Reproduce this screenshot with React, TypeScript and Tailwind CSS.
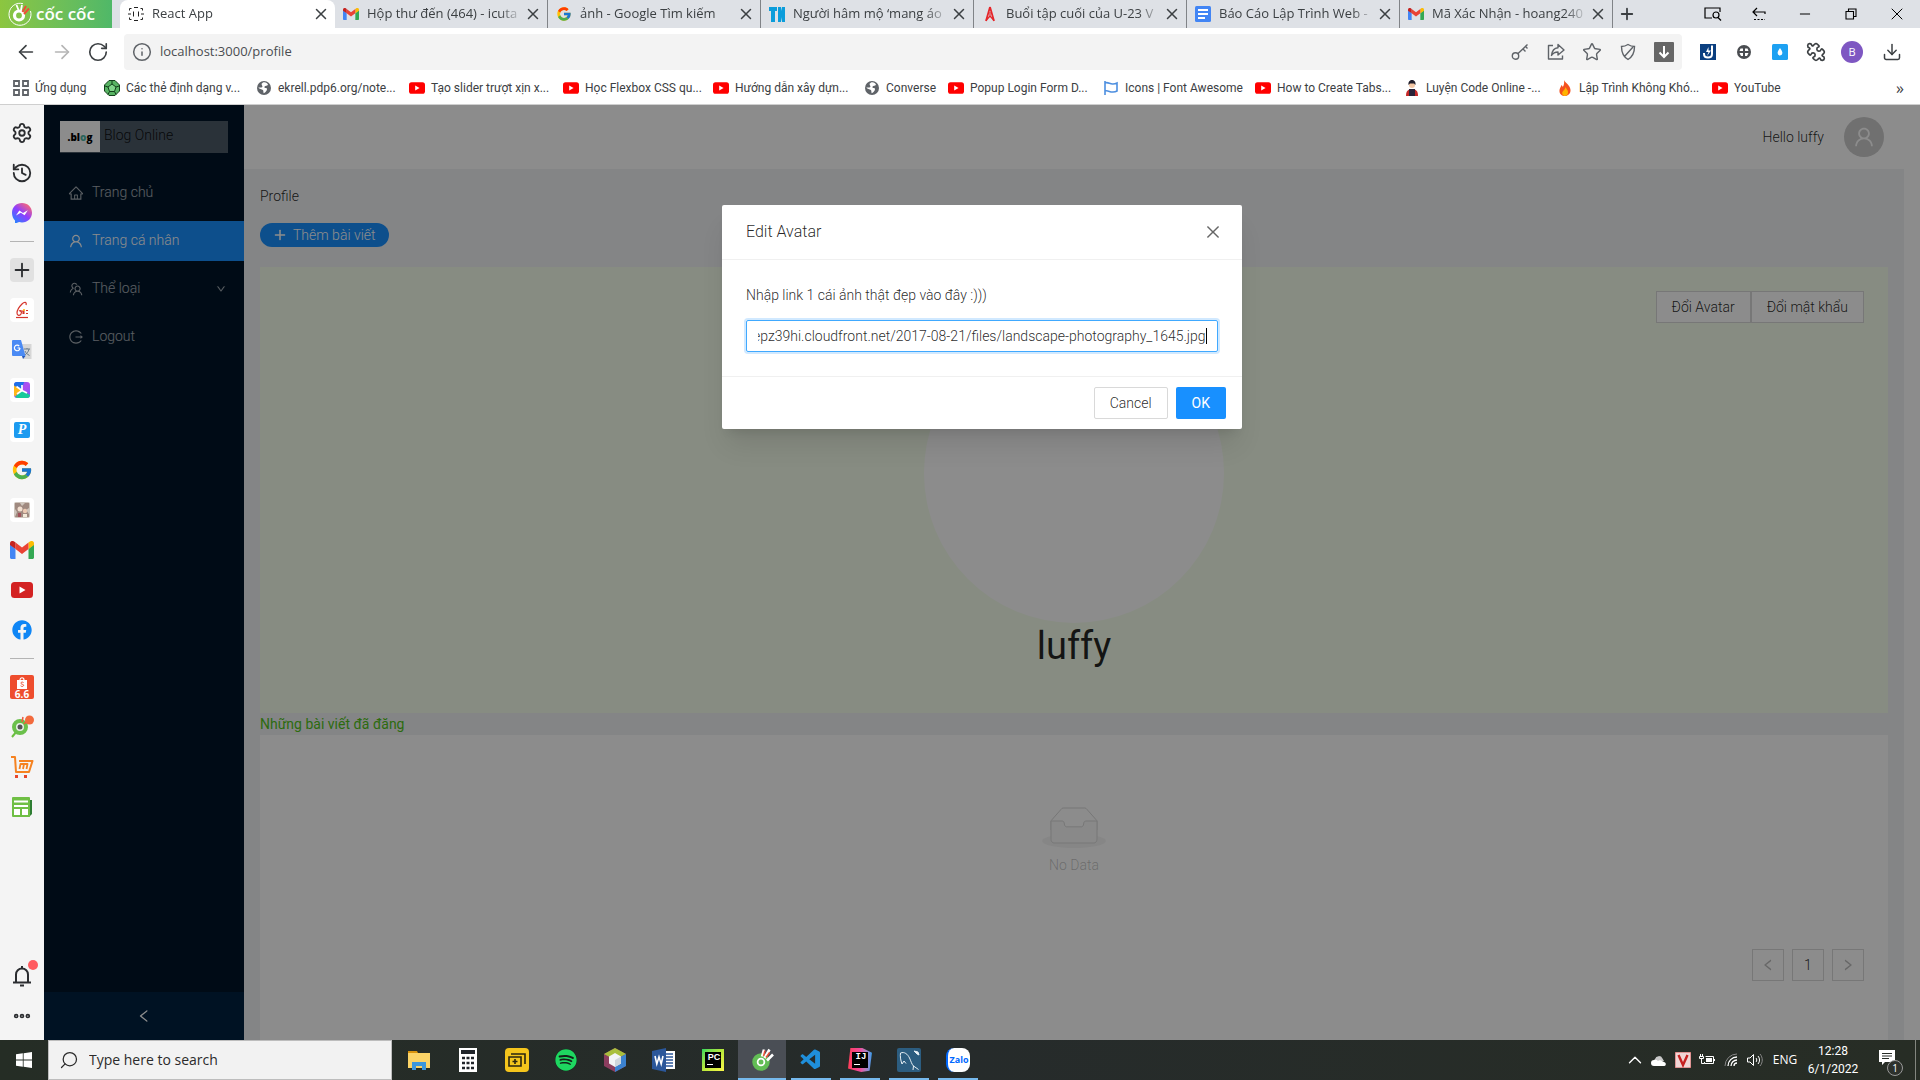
import { useEffect, useRef, useState, type ReactNode } from "react";
import {
  AiOutlineClose,
  AiOutlineDown,
  AiOutlineHome,
  AiOutlineLeft,
  AiOutlineLogout,
  AiOutlinePlus,
  AiOutlineRight,
  AiOutlineTeam,
  AiOutlineUser,
} from "react-icons/ai";
import { FcGoogle } from "react-icons/fc";
import { FaFacebook, FaSpotify } from "react-icons/fa";
import { VscVscode } from "react-icons/vsc";
import {
  ArrowLeft,
  ArrowRight,
  Bell,
  ChevronUp,
  Download,
  Ellipsis,
  History,
  Info,
  Minus,
  Plus,
  Puzzle,
  RotateCw,
  Search,
  Settings,
  Star,
  X,
} from "lucide-react";

/* ---------- small brand drawings ---------- */

function GmailIcon({ className }: { className: string }) {
  return (
    <svg viewBox="0 0 24 18" className={className} aria-hidden="true">
      <path d="M0 3v13.5C0 17.300.7 18 1.600 18H5.500V8z" fill="#4285f4" />
      <path d="M24 3v13.500c0 .8-.7 1.500-1.600 1.500H18.500V8z" fill="#34a853" />
      <path d="M18.500 1.600V8L24 4V2.500c0-2.200-2.400-3.300-4.100-2z" fill="#fbbc04" />
      <path d="M5.500 8V1.600L12 6.500l6.500-4.900V8L12 12.900z" fill="#ea4335" />
      <path d="M0 2.500V4l5.500 4V1.600L4.100.5C2.400-.8 0 .3 0 2.500z" fill="#c5221f" />
    </svg>
  );
}

function YoutubeIcon({ className, fill = "#ff0000" }: { className: string; fill?: string }) {
  return (
    <svg viewBox="0 0 22 16" className={className} aria-hidden="true">
      <rect width="22" height="16" rx="3.500" fill={fill} />
      <path d="M8.500 4.500v7l6-3.500z" fill="#fff" />
    </svg>
  );
}

function GlobeIcon() {
  return (
    <svg viewBox="0 0 16 16" className="size-4" aria-hidden="true">
      <circle cx="8" cy="8" r="7" fill="#5f6368" />
      <path d="M7 2.500c2.500-.6 4.500.5 5 2.300-1 1.400-2.600.6-3.400 1.600-.6 1 .4 1.600 1.400 1.700 1.200.2 1.300 1.500.5 2.600-.8 1-1.500 2.200-2.800 2.500-.6-1.200 0-2.300-.8-3.200C5.700 9 3.300 9.200 2.300 7.500c1.800-.2 2.900.2 4-.6C7 6 5.200 5 5.600 3.800z" fill="#fff" />
    </svg>
  );
}

function CocCocMark({ className, color = "#fff", core = "none" }: { className: string; color?: string; core?: string }) {
  return (
    <svg viewBox="0 0 24 24" className={className} aria-hidden="true">
      <circle cx="11" cy="14" r="6.500" fill={core} stroke={color} strokeWidth="4.500" />
      <circle cx="11" cy="14" r="2.500" fill={color} />
      <path d="M12 8.500 14 1.500M14.500 10l5-8.500M17 12.500l6-6" stroke="#fff" strokeWidth="2.600" />
      <path d="M13.500 8 15 2.500M16 9.500l3.500-5" stroke="#f04e37" strokeWidth="1.400" />
    </svg>
  );
}

function CocCocBadge() {
  return (
    <svg viewBox="0 0 24 24" className="size-6" fill="none" stroke="#fff" aria-hidden="true">
      <path d="M15 1.700A11 11 0 1 0 22.500 9" strokeWidth="1" />
      <circle cx="11" cy="13.500" r="4.500" strokeWidth="3.200" />
      <path d="M10.500 8 8.500 3M13 8l1-5" strokeWidth="1.800" />
      <path d="m14.500 10 3.500-6M16 12l5-5.500" stroke="#f04e37" strokeWidth="2" />
    </svg>
  );
}

function ReactFavicon() {
  return (
    <svg viewBox="0 0 16 16" className="size-4" fill="none" stroke="#222" strokeWidth="1" aria-hidden="true">
      <path d="M1.500 4.500v-2h2M12.500 2.500h2v2M14.500 11.500v2h-2M3.500 13.500h-2v-2" />
      <path d="M6 1.500h4M6 14.500h4" />
      <path d="M5.500 5.500v5M10.500 5.500v5M0 8h3M13 8h3" />
    </svg>
  );
}

/* ---------- browser chrome ---------- */

const tabs: { title: string; icon: ReactNode; active?: boolean }[] = [
  { title: "React App", icon: <ReactFavicon />, active: true },
  { title: "Hộp thư đến (464) - icuta", icon: <GmailIcon className="h-3 w-4" /> },
  { title: "ảnh - Google Tìm kiếm", icon: <FcGoogle className="size-4" /> },
  {
    title: "Người hâm mộ ‘mang áo",
    icon: (
      <svg viewBox="0 0 16 16" className="size-4" aria-hidden="true">
        <path d="M0 1h8v4H6v11H2V5H0zM9 1h3l1 4V1h3v15h-3l-1-5v5H9z" fill="#0b9ddb" />
      </svg>
    ),
  },
  {
    title: "Buổi tập cuối của U-23 V",
    icon: (
      <svg viewBox="0 0 16 16" className="size-4" fill="none" stroke="#e5252a" aria-hidden="true">
        <path d="M8 1 4 15M8 1l4 14" strokeWidth="1.800" />
        <path d="M8 6v4M4 14.500 8 10l4 4.500" strokeWidth="1.200" />
      </svg>
    ),
  },
  {
    title: "Báo Cáo Lập Trình Web -",
    icon: (
      <svg viewBox="0 0 16 16" className="size-4" aria-hidden="true">
        <rect width="16" height="16" rx="1.500" fill="#4285f4" />
        <path d="M3 4h10M3 8h10M3 12h7" stroke="#fff" strokeWidth="1.800" />
      </svg>
    ),
  },
  { title: "Mã Xác Nhận - hoang240", icon: <GmailIcon className="h-3 w-4" /> },
];

function TabStrip() {
  return (
    <div className="flex h-7 items-stretch bg-[#dee1e6]">
      <div className="flex w-28 shrink-0 items-center gap-1 bg-linear-to-r from-[#8cc63f] to-[#4fb868] pl-2">
        <CocCocBadge />
        <span className="font-['Open_Sans',sans-serif] text-[17px] font-semibold text-white">cốc cốc</span>
      </div>
      <div className="flex min-w-0 flex-1 pl-2">
        {tabs.map((tab) => (
          <div
            key={tab.title}
            className={
              tab.active
                ? "flex w-[215px] items-center gap-2 rounded-t-lg bg-white pr-1 pl-2"
                : "flex w-[213px] items-center gap-2 border-r border-[#808387] pr-1 pl-2"
            }
          >
            <span className="flex w-4 shrink-0 justify-center">{tab.icon}</span>
            <span className="-mr-2 min-w-0 flex-1 overflow-hidden mask-r-from-85% text-[13px] whitespace-nowrap text-[#3c4043]">{tab.title}</span>
            <button type="button" aria-label={"Close " + tab.title} className="flex w-5 shrink-0 justify-center">
              <X className="size-[18px] text-[#3c4043]" />
            </button>
          </div>
        ))}
        <button type="button" aria-label="New tab" className="flex w-7 items-center justify-center">
          <Plus className="size-[18px] text-[#3c4043]" strokeWidth={2.4} />
        </button>
      </div>
      <div className="flex text-black">
        <button type="button" aria-label="Search tabs" className="flex w-[46px] items-center justify-center">
          <svg viewBox="0 0 18 14" className="h-3.5 w-[18px]" fill="none" stroke="currentColor" strokeWidth="1.200" aria-hidden="true">
            <path d="M8 11H1V1h15v4" />
            <circle cx="12" cy="8" r="3" />
            <path d="m14 10.500 3 3" />
          </svg>
        </button>
        <button type="button" aria-label="Back to previous" className="flex w-[46px] items-center justify-center">
          <svg viewBox="0 0 14 14" className="size-3.5" fill="none" stroke="currentColor" strokeWidth="1.200" aria-hidden="true">
            <path d="M5 1 1 5l4 4M1 5h12v2" />
            <path d="M2 12.500h11" strokeDasharray="2 1.500" />
          </svg>
        </button>
        <button type="button" aria-label="Minimize" className="flex w-[46px] items-center justify-center">
          <Minus className="size-4" strokeWidth={1.5} />
        </button>
        <button type="button" aria-label="Restore" className="flex w-[46px] items-center justify-center">
          <svg viewBox="0 0 12 12" className="size-3" fill="none" stroke="currentColor" strokeWidth="1.100" aria-hidden="true">
            <path d="M1 3.500h7.500V11H1zM3.500 3.500V1H11v7.500H8.500" />
          </svg>
        </button>
        <button type="button" aria-label="Close window" className="flex w-[46px] items-center justify-center">
          <X className="size-5" strokeWidth={1.2} />
        </button>
      </div>
    </div>
  );
}

const omniboxActions: { label: string; icon: ReactNode }[] = [
  {
    label: "Saved passwords",
    icon: (
      <svg viewBox="0 0 18 18" className="size-[18px]" fill="none" stroke="currentColor" strokeWidth="1.400" aria-hidden="true">
        <circle cx="4.500" cy="13" r="3.200" />
        <path d="M6.800 10.700 16.500 1.500M12 6l2.500 2.500M14.500 3.500l2 2" />
      </svg>
    ),
  },
  {
    label: "Share",
    icon: (
      <svg viewBox="0 0 18 18" className="size-[18px]" fill="none" stroke="currentColor" strokeWidth="1.400" strokeLinejoin="round" aria-hidden="true">
        <path d="M6 2.500H1.500V16h14v-3.500" />
        <path d="M11 1.500 17 7l-6 5V9c-3 0-5 1-6.500 3.500C5 8 7 5 11 4.700z" />
      </svg>
    ),
  },
  { label: "Bookmark this page", icon: <Star className="size-5" strokeWidth={1.7} /> },
  {
    label: "Ad blocker",
    icon: (
      <svg viewBox="0 0 18 18" className="size-[18px]" fill="none" stroke="currentColor" strokeWidth="1.400" aria-hidden="true">
        <path d="M2.500 3.500C5 3.500 7 2.800 9 1.500c2 1.300 4 2 6.500 2 0 6-1.500 10-6.500 13-5-3-6.500-7-6.500-13zM5 14 14 4" />
      </svg>
    ),
  },
  {
    label: "Download media",
    icon: (
      <svg viewBox="0 0 20 20" className="size-5" aria-hidden="true">
        <rect width="20" height="20" rx="1" fill="#666" />
        <path d="M10 4v11M5.500 10.500 10 15l4.500-4.500" fill="none" stroke="#fff" strokeWidth="2" />
      </svg>
    ),
  },
];

const extensions: { label: string; icon: ReactNode }[] = [
  {
    label: "J extension",
    icon: (
      <svg viewBox="0 0 16 16" className="size-4" aria-hidden="true">
        <rect width="16" height="16" fill="#0b3f80" />
        <path d="M12 1.500v8.500c0 2.500-1.500 3.500-4 3.500s-4-1-4-3.500V9" fill="none" stroke="#fff" strokeWidth="2" />
        <path d="M8.500 3 6 8h2.500L7 12l4-5.500H8.500z" fill="#fff" />
      </svg>
    ),
  },
  {
    label: "Target extension",
    icon: (
      <svg viewBox="0 0 16 16" className="size-4" aria-hidden="true">
        <circle cx="8" cy="8" r="7" fill="#4a4d51" />
        <path d="M4.500 4.500H7V7H3.500zM9 4.500h2.500L12.500 7H9zM3.500 9H7v3H5zM9 9h3.500L11 12H9z" fill="#fff" />
      </svg>
    ),
  },
  {
    label: "Water drop extension",
    icon: (
      <svg viewBox="0 0 16 16" className="size-4" aria-hidden="true">
        <rect width="16" height="16" rx="1.500" fill="#1da1f2" />
        <path d="M8 4c1.500 2.300 2.400 3.600 2.400 5.100a2.400 2.400 0 0 1-4.800 0C5.600 7.600 6.500 6.300 8 4z" fill="#fff" />
      </svg>
    ),
  },
  { label: "Extensions", icon: <Puzzle className="size-5 -scale-x-100" strokeWidth={2} /> },
  {
    label: "Account",
    icon: <span className="flex size-[22px] items-center justify-center rounded-full bg-[#7e57c2] text-[11px] text-white">B</span>,
  },
  { label: "Downloads", icon: <Download className="size-5" strokeWidth={1.8} /> },
];

function Toolbar() {
  return (
    <div className="flex h-12 items-center bg-white pr-2.5 pl-2 text-[#3c4043]">
      <button type="button" aria-label="Back" className="flex w-9 justify-center">
        <ArrowLeft className="size-[22px]" strokeWidth={1.8} />
      </button>
      <button type="button" aria-label="Forward" className="flex w-9 justify-center text-[#b5b5b5]">
        <ArrowRight className="size-[22px]" strokeWidth={1.8} />
      </button>
      <button type="button" aria-label="Reload" className="mr-2 flex w-9 justify-center">
        <RotateCw className="size-[22px]" strokeWidth={1.8} />
      </button>
      <div className="flex h-9 flex-1 items-center rounded-sm bg-[#f3f3f3] pl-2">
        <Info className="mr-2 size-5 text-[#5f6368]" strokeWidth={1.8} />
        <input aria-label="Address" defaultValue="localhost:3000/profile" className="min-w-0 flex-1 bg-transparent text-[13px] text-[#4a4d51] outline-none" />
        {omniboxActions.map((a) => (
          <button key={a.label} type="button" aria-label={a.label} className="flex w-9 justify-center text-[#5f6368]">
            {a.icon}
          </button>
        ))}
      </div>
      <div className="flex pl-2">
        {extensions.map((e) => (
          <button key={e.label} type="button" aria-label={e.label} className="flex w-9 items-center justify-center last:ml-1">
            {e.icon}
          </button>
        ))}
      </div>
    </div>
  );
}

const yt = <YoutubeIcon className="h-3 w-4" />;

const bookmarks: { label: string; width: string; icon: ReactNode }[] = [
  {
    label: "Ứng dụng",
    width: "w-[91px]",
    icon: (
      <svg viewBox="0 0 16 16" className="size-4" fill="none" stroke="#5f6368" strokeWidth="1.800" aria-hidden="true">
        <path d="M1 1h5v5H1zM10 1h5v5h-5zM1 10h5v5H1zM10 10h5v5h-5z" />
      </svg>
    ),
  },
  {
    label: "Các thẻ định dạng v...",
    width: "w-[152px]",
    icon: (
      <svg viewBox="0 0 16 16" className="size-4" aria-hidden="true">
        <path d="M5 .5h6L15.500 5v6L11 15.500H5L.5 11V5z" fill="#58b463" stroke="#12401b" />
        <path d="M8 4 12 7l-1.500 4.500h-5L4 7z" fill="#7fd489" stroke="#12401b" />
        <path d="M8 4V.5M12 7l3-1M10.500 11.500l1.500 3M5.500 11.500l-1.500 3M4 7 1 6" stroke="#12401b" />
      </svg>
    ),
  },
  { label: "ekrell.pdp6.org/note...", width: "w-[153px]", icon: <GlobeIcon /> },
  { label: "Tạo slider trượt xịn x...", width: "w-[154px]", icon: yt },
  { label: "Học Flexbox CSS qu...", width: "w-[150px]", icon: yt },
  { label: "Hướng dẫn xây dựn...", width: "w-[151px]", icon: yt },
  { label: "Converse", width: "w-[84px]", icon: <GlobeIcon /> },
  { label: "Popup Login Form D...", width: "w-[155px]", icon: yt },
  {
    label: "Icons | Font Awesome",
    width: "w-[152px]",
    icon: (
      <svg viewBox="0 0 16 16" className="size-4" fill="none" stroke="#4d8fe0" strokeWidth="1.600" aria-hidden="true">
        <path d="M2 1v14M2 3c3-1.500 5 1.500 8 1 2 0 3-.5 4-1v8c-1 .6-2 1-4 1-3 .4-5-2-8-1" />
      </svg>
    ),
  },
  { label: "How to Create Tabs...", width: "w-[149px]", icon: yt },
  {
    label: "Luyện Code Online -...",
    width: "w-[153px]",
    icon: (
      <svg viewBox="0 0 16 16" className="size-4" aria-hidden="true">
        <path d="M2 16c0-5 2-7 6-7s6 2 6 7z" fill="#c62828" />
        <path d="M5 9h6v7H5z" fill="#2b2338" />
        <circle cx="8" cy="5" r="3" fill="#f3c7a5" />
        <path d="M4.500 5C4 1.500 6 0 8 0s4 1.500 3.500 5L10 3.500H6z" fill="#1f1d2b" />
      </svg>
    ),
  },
  {
    label: "Lập Trình Không Khó...",
    width: "w-[155px]",
    icon: (
      <svg viewBox="0 0 16 16" className="size-4" aria-hidden="true">
        <path d="M7 0c1 3 6 4.500 6.500 10 .2 3.500-2.500 6-5.500 6s-6-2-5.500-6C2.700 8 4 7 4.500 5c.8.500 1 1.200 1.300 2C7 5 7.500 2.500 7 0z" fill="#f4511e" />
        <path d="M8.500 7c.5 2 3 3 2.500 6-.3 2-1.600 3-3.200 3S5 14.500 5.200 12.500C5.500 11 8 10 8.500 7z" fill="#ffb300" />
      </svg>
    ),
  },
  { label: "YouTube", width: "w-[80px]", icon: yt },
];

function BookmarkBar() {
  return (
    <nav aria-label="Bookmarks" className="flex h-[29px] items-start border-b border-[#cfcfcf] bg-white pl-[13px]">
      {bookmarks.map((b) => (
        <a key={b.label} href="#bookmark" className={"flex h-6 items-center gap-1.5 " + b.width}>
          <span className="flex w-4 shrink-0 justify-center">{b.icon}</span>
          <span className="font-[Roboto,sans-serif] text-xs whitespace-nowrap text-[#3c4043]">{b.label}</span>
        </a>
      ))}
      <button type="button" aria-label="More bookmarks" className="mr-4 ml-auto h-6 text-base leading-5 text-[#3c4043]">
        »
      </button>
    </nav>
  );
}

/* ---------- left rail ---------- */

function Tile({ children }: { children: ReactNode }) {
  return <span className="flex size-6 items-center justify-center rounded-sm bg-white">{children}</span>;
}

const railTop: { label: string; icon: ReactNode }[] = [
  { label: "Settings", icon: <Settings className="size-[22px]" strokeWidth={2} /> },
  { label: "History", icon: <History className="size-[22px]" strokeWidth={2} /> },
  {
    label: "Messenger",
    icon: (
      <svg viewBox="0 0 20 20" className="size-5" aria-hidden="true">
        <defs>
          <linearGradient id="msg" x1="0" y1="1" x2=".8" y2="0">
            <stop offset="0" stopColor="#1390ff" />
            <stop offset=".55" stopColor="#8f3dff" />
            <stop offset="1" stopColor="#ff6b6e" />
          </linearGradient>
        </defs>
        <path d="M10 0c5.700 0 10 4.200 10 9.700s-4.300 9.700-10 9.700c-1 0-2-.1-2.900-.4L4.500 20H3v-2.600C1.200 15.600 0 13 0 9.700 0 4.200 4.300 0 10 0z" fill="url(#msg)" />
        <path d="m4 12.500 3.300-5 3.700 2.500 4.800-2.700-3.200 5-3.800-2.500z" fill="#fff" />
      </svg>
    ),
  },
];

const railApps: { label: string; icon: ReactNode }[] = [
  {
    label: "Add shortcut",
    icon: (
      <span className="flex size-6 items-center justify-center rounded-sm bg-[#e1e1e1]">
        <Plus className="size-[22px]" strokeWidth={2} />
      </span>
    ),
  },
  {
    label: "Signature site",
    icon: (
      <Tile>
        <svg viewBox="0 0 16 18" className="h-[18px] w-4" fill="none" stroke="#d5352c" aria-hidden="true">
          <path d="M12 4c1-3-1.500-3.500-4-1S3 9 3 12s3 3 4 1 0-4-2-3" strokeWidth="1.200" />
          <path d="M6 10h3v3M10 9.500v3.500M12 9.500h2M12 12.500h2" strokeWidth="1.100" />
          <path d="M2 16.500h12" strokeWidth="1.200" />
          <circle cx="10" cy="9" r="1" fill="#ffb300" stroke="none" />
        </svg>
      </Tile>
    ),
  },
  {
    label: "Translate",
    icon: (
      <svg viewBox="0 0 20 20" className="size-5" aria-hidden="true">
        <path d="M8 4h11.500v15H11z" fill="#d6d6d6" />
        <path d="M12 9h6M15 8v1M17 9c-.5 3-2.500 5-4.500 6M13 11c.8 2 2 3 4.500 4.500" stroke="#6b7d8c" fill="none" />
        <path d="M1 0h8l4.500 16H1a1 1 0 0 1-1-1V1a1 1 0 0 1 1-1z" fill="#4a8af4" />
        <path d="M10 16h3.500L11 19z" fill="#2356b8" />
        <path d="M8 8H5.500M8 8a2.800 2.800 0 1 1-.8-2" stroke="#fff" strokeWidth="1.200" fill="none" />
      </svg>
    ),
  },
  {
    label: "Photos",
    icon: (
      <Tile>
        <svg viewBox="0 0 16 16" className="size-4" aria-hidden="true">
          <defs>
            <linearGradient id="photo" x1="0" y1="0" x2="1" y2="1">
              <stop offset="0" stopColor="#5b6cf5" />
              <stop offset=".5" stopColor="#b14df0" />
              <stop offset="1" stopColor="#7a5cf5" />
            </linearGradient>
          </defs>
          <rect width="16" height="16" rx="3" fill="url(#photo)" />
          <path d="M3 0h7L7.500 8 0 4V3a3 3 0 0 1 3-3z" fill="#1e6fe8" />
          <path d="M0 3.500 7.500 8 1 14.500 0 13z" fill="#ffb818" />
          <path d="m1 15 6.500-7L16 13a3 3 0 0 1-3 3H3z" fill="#18c99a" />
          <path d="M8 3v5.500L3 12M8 8.500 13 11M2.500 4.500 8 8.500" stroke="#fff" strokeWidth="1.700" fill="none" />
        </svg>
      </Tile>
    ),
  },
  {
    label: "P site",
    icon: (
      <Tile>
        <span className="flex size-4 items-center justify-center rounded-xs bg-[#1d9bf0] font-['Liberation_Serif',serif] text-sm font-bold text-white italic">P</span>
      </Tile>
    ),
  },
  { label: "Google", icon: <FcGoogle className="size-[22px]" /> },
  {
    label: "Picture site",
    icon: (
      <Tile>
        <svg viewBox="0 0 16 16" className="size-4" aria-hidden="true">
          <rect width="16" height="16" rx="2" fill="#cfc6bd" />
          <path d="M1 1h5l2 3 3-3h4v5l-3 2 3 4v3H1l2-5-2-3z" fill="#a08a80" />
          <circle cx="6" cy="7" r="2.500" fill="#f1dfd0" />
          <circle cx="11" cy="9" r="2.200" fill="#ecc9b2" />
          <path d="M4 11h3v4H4z" fill="#a1525a" />
          <path d="M9 12h4v3H9z" fill="#f3ead9" />
        </svg>
      </Tile>
    ),
  },
  { label: "Gmail", icon: <GmailIcon className="h-[18px] w-6" /> },
  { label: "YouTube", icon: <YoutubeIcon className="h-4 w-[22px]" fill="#d32222" /> },
  { label: "Facebook", icon: <FaFacebook className="size-5 text-[#0f86f5]" /> },
];

const railPromos: { label: string; icon: ReactNode }[] = [
  {
    label: "Shopee",
    icon: (
      <span className="flex size-6 flex-col items-center justify-end rounded-xs bg-[#ee4d2d] text-[10px] leading-[10px] font-bold text-white">
        <svg viewBox="0 0 12 12" className="size-3" aria-hidden="true">
          <path d="M1 3h10v9H1z" fill="#fff" />
          <path d="M4 3c0-3 4-3 4 0" fill="none" stroke="#fff" strokeWidth="1.200" />
          <path d="M7.500 5.500c-1.500-1-3 0-2.500 1s3 .8 2.600 2-2 1.200-3 .3" fill="none" stroke="#ee4d2d" />
        </svg>
        <span>6.6</span>
      </span>
    ),
  },
  {
    label: "Cốc Cốc game",
    icon: (
      <svg viewBox="0 0 24 24" className="size-6" aria-hidden="true">
        <path d="m2 22 5-6" stroke="#6bbf3f" strokeWidth="2" />
        <circle cx="10" cy="12" r="6" fill="#e8efe8" stroke="#6bc04b" strokeWidth="4" />
        <circle cx="10" cy="12" r="2.500" fill="#555" />
        <path d="m12 7 1-5M14 9l4-4" stroke="#ef5a3c" strokeWidth="1.500" />
        <circle cx="19.500" cy="5" r="4.500" fill="#f26a3d" />
      </svg>
    ),
  },
  {
    label: "Shopping",
    icon: (
      <svg viewBox="0 0 24 24" className="size-6" fill="none" stroke="#f58220" strokeWidth="2" strokeLinejoin="round" aria-hidden="true">
        <path d="M1 2h4l1 15h13l3.500-11H9" />
        <path d="m9.500 14 1-5h7l-1 5M14 9l-1 5" strokeWidth="1.800" />
        <path d="M5 21.500h3M14 21.500h3" stroke="#e8472b" strokeWidth="3" />
      </svg>
    ),
  },
  {
    label: "News",
    icon: (
      <svg viewBox="0 0 20 20" className="size-5" aria-hidden="true">
        <path d="M16 3h4v14l-3 3z" fill="#2e7d32" />
        <rect width="18" height="20" rx="1" fill="#6fbf44" />
        <path d="M2 4.500h14M2 9h14" stroke="#fff" strokeWidth="2" />
        <path d="M2 12h6v6H2zM10 12h6v6h-6z" fill="#fff" />
      </svg>
    ),
  },
];

function RailGroup({ items }: { items: { label: string; icon: ReactNode }[] }) {
  return (
    <>
      {items.map((it) => (
        <button key={it.label} type="button" aria-label={it.label} className="flex h-10 w-full shrink-0 items-center justify-center">
          {it.icon}
        </button>
      ))}
    </>
  );
}

function Rail() {
  return (
    <aside className="flex w-11 shrink-0 flex-col items-center bg-[#f4f4f4] pt-2 pb-1 text-[#2b2d30]">
      <RailGroup items={railTop} />
      <hr className="my-2 w-6 border-[#b4b4b4]" />
      <RailGroup items={railApps} />
      <hr className="my-2 w-6 border-[#b4b4b4]" />
      <RailGroup items={railPromos} />
      <button type="button" aria-label="Notifications" className="relative mt-auto flex h-10 w-full items-center justify-center">
        <svg viewBox="0 0 20 22" className="h-[22px] w-5" fill="none" stroke="currentColor" strokeWidth="2" aria-hidden="true">
          <path d="M4 17V9.500a6 6 0 0 1 12 0V17M1 17.500h18M10 1v2.500" />
          <path d="M8 20.500h4" strokeWidth="2" />
        </svg>
        <span className="absolute top-1 right-1.5 size-2.5 rounded-full bg-[#ff5a5f]" />
      </button>
      <button type="button" aria-label="More" className="flex h-10 w-full items-center justify-center">
        <Ellipsis className="size-5" strokeWidth={3.5} />
      </button>
    </aside>
  );
}

/* ---------- application ---------- */

const menu: { label: string; icon: ReactNode; active?: boolean; submenu?: boolean }[] = [
  { label: "Trang chủ", icon: <AiOutlineHome className="size-4" /> },
  { label: "Trang cá nhân", icon: <AiOutlineUser className="size-4" />, active: true },
  { label: "Thể loại", icon: <AiOutlineTeam className="size-4" />, submenu: true },
  { label: "Logout", icon: <AiOutlineLogout className="size-4" /> },
];

function Sider() {
  return (
    <aside className="flex w-[200px] shrink-0 flex-col bg-[#001529]">
      <div className="m-4 mb-5 flex h-8 items-start bg-white/30">
        <span className="flex h-[31px] w-10 items-center justify-center bg-white font-['Open_Sans',sans-serif] text-[10px] font-extrabold text-black">
          .bl<span className="text-[#4db6a5]">o</span>g
        </span>
        <span className="pt-[3px] pl-1 text-black/85">Blog Online</span>
      </div>
      <nav className="flex flex-col gap-2">
        {menu.map((m) => (
          <a
            key={m.label}
            href="#menu"
            className={
              m.active
                ? "flex h-10 items-center gap-2 bg-[#1890ff] pr-[18px] pl-6 text-white"
                : "flex h-10 items-center gap-2 pr-[18px] pl-6 text-white/65"
            }
          >
            {m.icon}
            <span className="flex-1 pb-0.5">{m.label}</span>
            {m.submenu && <AiOutlineDown className="size-2.5" strokeWidth={30} />}
          </a>
        ))}
      </nav>
      <button type="button" aria-label="Collapse sidebar" className="mt-auto flex h-12 items-center justify-center bg-[#002140] text-white">
        <AiOutlineLeft className="size-4" />
      </button>
    </aside>
  );
}

function EmptyState() {
  return (
    <div className="flex flex-col items-center gap-1.5 text-black/25">
      <svg viewBox="0 0 64 41" className="h-[41px] w-16" aria-hidden="true">
        <g transform="translate(0 1)" fill="none">
          <ellipse cx="32" cy="33" rx="32" ry="7" fill="#f5f5f5" />
          <g stroke="#d9d9d9">
            <path d="M55 12.760L44.854 1.258C44.367.474 43.656 0 42.907 0H21.093c-.749 0-1.460.474-1.947 1.257L9 12.761V22h46v-9.240z" />
            <path
              fill="#fafafa"
              d="M41.613 15.931c0-1.605.994-2.930 2.227-2.931H55v18.137C55 33.260 53.680 35 52.050 35h-40.100C10.320 35 9 33.259 9 31.137V13h11.160c1.233 0 2.227 1.323 2.227 2.928v.022c0 1.605 1.005 2.901 2.237 2.901h14.752c1.232 0 2.237-1.308 2.237-2.913v-.007z"
            />
          </g>
        </g>
      </svg>
      <p>No Data</p>
    </div>
  );
}

function ProfilePage() {
  return (
    <div className="flex min-w-0 flex-1 flex-col bg-white">
      <header className="flex h-16 shrink-0 items-center justify-end gap-5 bg-white pr-9 text-black/85">
        <span>Hello luffy</span>
        <span className="flex size-10 items-center justify-center rounded-full bg-[#ccc] text-white">
          <AiOutlineUser className="size-6" />
        </span>
      </header>
      <main className="mr-4 flex min-h-0 flex-1 flex-col bg-[#f0f2f5] px-4 text-black/85">
        <h1 className="mt-4 mb-4">Profile</h1>
        <button type="button" className="flex h-6 shrink-0 items-center gap-1.5 self-start rounded-full bg-[#1890ff] px-[13px] text-white">
          <AiOutlinePlus className="size-3.5" strokeWidth={40} />
          <span>Thêm bài viết</span>
        </button>
        <section className="mt-5 flex shrink-0 flex-col bg-[#f6ffed] p-6 pb-11">
          <div className="flex justify-end">
            <button type="button" className="h-8 border border-[#d9d9d9] bg-white px-[15px]">
              Đổi Avatar
            </button>
            <button type="button" className="h-8 border border-[#d9d9d9] bg-white px-[15px]">
              Đổi mật khẩu
            </button>
          </div>
          <span className="size-[300px] self-center rounded-full bg-white" />
          <h2 className="self-center text-[38px] leading-[46px] font-normal">luffy</h2>
        </section>
        <h3 className="shrink-0 font-normal text-[#52c41a]">Những bài viết đã đăng</h3>
        <section className="flex min-h-0 flex-1 flex-col overflow-hidden bg-white px-6 pt-[72px]">
          <EmptyState />
          <div className="mt-[73px] flex shrink-0 justify-end gap-2">
            <button type="button" aria-label="Previous page" disabled className="flex size-8 items-center justify-center border border-[#d9d9d9] text-black/25">
              <AiOutlineLeft className="size-3.5" strokeWidth={20} />
            </button>
            <button type="button" className="flex size-8 items-center justify-center border border-[#d9d9d9]">
              1
            </button>
            <button type="button" aria-label="Next page" disabled className="flex size-8 items-center justify-center border border-[#d9d9d9] text-black/25">
              <AiOutlineRight className="size-3.5" strokeWidth={20} />
            </button>
          </div>
        </section>
      </main>
    </div>
  );
}

function EditAvatarModal() {
  const field = useRef<HTMLInputElement>(null);
  const [link, setLink] = useState("epz39hi.cloudfront.net/2017-08-21/files/landscape-photography_1645.jpg");

  useEffect(() => {
    const el = field.current;
    if (!el) return;
    el.focus();
    el.setSelectionRange(el.value.length, el.value.length);
    el.scrollLeft = el.scrollWidth;
  }, []);

  return (
    <div className="absolute inset-0 flex items-start justify-center bg-black/45 pt-[100px]">
      <div role="dialog" aria-labelledby="dialog-title" className="flex w-[520px] flex-col rounded-xs bg-white text-black/85 shadow-xl">
        <div className="flex items-center justify-between border-b border-[#f0f0f0] px-6 py-4">
          <h2 id="dialog-title" className="text-base leading-[22px]">
            Edit Avatar
          </h2>
          <button type="button" aria-label="Close" className="-mr-1 text-black/60">
            <AiOutlineClose className="size-[18px]" />
          </button>
        </div>
        <div className="flex flex-col gap-3.5 p-6">
          <label htmlFor="avatar-link">Nhập link 1 cái ảnh thật đẹp vào đây :)))</label>
          <span className="relative flex">
            <input
              id="avatar-link"
              ref={field}
              value={link}
              onChange={(e) => setLink(e.target.value)}
              className="h-8 min-w-0 flex-1 rounded-xs border border-[#40a9ff] px-[11px] text-right caret-transparent ring-2 ring-[#1890ff]/20 outline-none"
            />
            <span className="absolute inset-y-2 right-[11px] w-px bg-black" />
          </span>
        </div>
        <div className="flex justify-end gap-2 border-t border-[#f0f0f0] px-4 py-2.5">
          <button type="button" className="h-8 rounded-xs border border-[#d9d9d9] px-[15px]">
            Cancel
          </button>
          <button type="button" className="h-8 rounded-xs bg-[#1890ff] px-4 font-normal text-white">
            OK
          </button>
        </div>
      </div>
    </div>
  );
}

/* ---------- taskbar ---------- */

const apps: { label: string; state?: "active" | "running"; icon: ReactNode }[] = [
  {
    label: "File Explorer",
    icon: (
      <svg viewBox="0 0 22 20" className="h-5 w-[22px]" aria-hidden="true">
        <path d="M0 1h9l1 2H0z" fill="#d9930d" />
        <path d="M0 3h22v15H0z" fill="#fbd367" />
        <path d="M4 20v-8h14v8h-4v-4H8v4z" fill="#3c96dc" />
      </svg>
    ),
  },
  {
    label: "Calculator",
    icon: (
      <svg viewBox="0 0 18 24" className="h-6 w-[18px]" aria-hidden="true">
        <path d="M0 0h18v24H0z" fill="#fff" />
        <path d="M2 2h14v4H2z" fill="#20252a" />
        <path d="M3 10h12M3 15h12M3 20h12" stroke="#20252a" strokeWidth="2.500" strokeDasharray="3 1.500" />
      </svg>
    ),
  },
  {
    label: "Capture",
    icon: (
      <svg viewBox="0 0 24 24" className="size-6" fill="none" stroke="#2a2410" strokeWidth="1.600" aria-hidden="true">
        <rect width="24" height="24" rx="4" fill="#f5c51c" stroke="none" />
        <path d="M4 9h12v9H4zM6 6h14v10M10 11v5M7.500 13.500h5" />
      </svg>
    ),
  },
  {
    label: "Spotify",
    icon: (
      <span className="flex size-[22px] items-center justify-center rounded-full bg-[#15211a]">
        <FaSpotify className="size-[22px] text-[#1ed760]" />
      </span>
    ),
  },
  {
    label: "Virtual machine",
    icon: (
      <svg viewBox="0 0 22 24" className="h-6 w-[22px]" aria-hidden="true">
        <path d="M11 0 22 6v12l-11 6L0 18V6z" fill="#8b3d5e" />
        <path d="m11 0 11 6-11 6L0 6z" fill="#a9bf3d" />
        <path d="m22 6v12l-11 6V12z" fill="#3b82d0" />
        <path d="m11 5 6 3.500v7L11 19l-6-3.500v-7z" fill="#f2f4f6" />
        <path d="m11 12 6-3.500v7L11 19z" fill="#cfd6dc" />
      </svg>
    ),
  },
  {
    label: "Word",
    icon: (
      <svg viewBox="0 0 24 24" className="size-6" aria-hidden="true">
        <path d="M12 3h11v18H12z" fill="#fff" />
        <path d="M14 6h7M14 9h7M14 12h7M14 15h7M14 18h7" stroke="#2b579a" strokeWidth="1.300" />
        <path d="M0 3 14 0v24L0 21z" fill="#2b579a" />
        <path d="m3 8 1.800 8L7 9l2.200 7L11 8" fill="none" stroke="#fff" strokeWidth="1.600" />
      </svg>
    ),
  },
  {
    label: "PyCharm",
    icon: (
      <span className="flex size-[22px] items-center justify-center bg-linear-to-br from-[#21d75a] via-[#b8e83a] to-[#fcf84a]">
        <span className="flex size-4 flex-col bg-black pl-0.5 font-['Liberation_Sans',sans-serif] text-[9px] leading-[10px] font-bold text-white">
          PC
          <span className="mt-0.5 h-px w-1.5 bg-white" />
        </span>
      </span>
    ),
  },
  { label: "Cốc Cốc", state: "active", icon: <CocCocMark className="size-6" color="#62bd55" core="#fff" /> },
  { label: "Visual Studio Code", state: "running", icon: <VscVscode className="size-6 text-[#1f8fdb]" /> },
  {
    label: "IntelliJ IDEA",
    state: "running",
    icon: (
      <span className="flex size-6 items-center justify-center bg-linear-to-r from-[#fe3d57] via-[#f0489a] to-[#1e9bea] [clip-path:polygon(10%_0,60%_0,100%_20%,90%_95%,55%_100%,0_85%)]">
        <span className="flex size-4 flex-col bg-black pl-0.5 font-['Liberation_Mono',monospace] text-[9px] leading-[10px] font-bold text-white">
          IJ
          <span className="mt-0.5 h-px w-1.5 bg-white" />
        </span>
      </span>
    ),
  },
  {
    label: "MySQL Workbench",
    state: "running",
    icon: (
      <svg viewBox="0 0 24 24" className="size-6" fill="none" stroke="#e8f0f5" aria-hidden="true">
        <rect width="24" height="24" rx="2" fill="#2c5d80" stroke="none" />
        <path d="M5 16C3.500 12 3 8 3.500 5c4-1.500 7 1 9 5 1.500 3 2 6 4 8l5 3.500M5 16l2-3 2 2.500M16.500 18l-.5 4" />
        <path d="m17 3 4 1 1 3-2-1z" fill="#e8f0f5" />
      </svg>
    ),
  },
  {
    label: "Zalo",
    state: "running",
    icon: (
      <span className="flex size-6 items-center justify-center rounded-lg border-l-2 border-[#0068ff] bg-white font-['Open_Sans',sans-serif] text-[9px] font-bold text-[#0068ff]">
        Zalo
      </span>
    ),
  },
];

function Taskbar() {
  return (
    <footer className="flex h-10 shrink-0 bg-linear-to-r from-[#252d25] via-[#262b2b] to-[#272d25] text-white">
      <button type="button" aria-label="Start" className="flex w-12 items-center justify-center">
        <svg viewBox="0 0 16 16" className="size-4" fill="#fff" aria-hidden="true">
          <path d="M0 2.200 6.800 1.300v6.300H0zM7.600 1.200 16 0v7.600H7.600zM0 8.400h6.800v6.300L0 13.800zM7.600 8.400H16V16l-8.400-1.200z" />
        </svg>
      </button>
      <label className="mr-[3px] flex w-[344px] items-center gap-2.5 border border-[#bdbdbd] bg-[#f2f2f2] pl-2.5 text-[#2b2b2b]">
        <Search className="size-5 -scale-x-100" strokeWidth={1.5} />
        <input placeholder="Type here to search" className="min-w-0 flex-1 bg-transparent text-sm outline-none placeholder:text-[#2b2b2b]" />
      </label>
      <div className="flex gap-px">
        {apps.map((a) => (
          <button
            key={a.label}
            type="button"
            aria-label={a.label}
            className={a.state === "active" ? "flex w-12 flex-col items-center bg-[#4a4e55]" : "flex w-12 flex-col items-center"}
          >
            <span className="flex flex-1 items-center pt-0.5">{a.icon}</span>
            <span
              className={
                a.state === "active" ? "h-0.5 w-full bg-[#76b9ed]" : a.state === "running" ? "h-0.5 w-10 bg-[#76b9ed]" : "h-0.5 w-10"
              }
            />
          </button>
        ))}
      </div>
      <div className="ml-auto flex items-center">
        <button type="button" aria-label="Show hidden icons" className="flex w-6 justify-center">
          <ChevronUp className="size-[22px]" strokeWidth={1.5} />
        </button>
        <span className="flex w-6 justify-center">
          <svg viewBox="0 0 16 11" className="h-[11px] w-4" aria-label="OneDrive">
            <path d="M4 4a4 4 0 0 1 7.500-.5L13 6H3z" fill="#c9c9c9" />
            <path d="M3 11a3 3 0 0 1 0-6c1.500-.4 3 0 4 1 1-.8 2-.9 3-.5l4 2a2 2 0 0 1-.5 3.500z" fill="#fff" />
          </svg>
        </span>
        <span className="flex w-6 justify-center">
          <svg viewBox="0 0 16 16" className="size-4" aria-label="Vietnamese keyboard">
            <rect width="16" height="16" fill="#f1d5d5" stroke="#c55" />
            <path d="M3.500 3 8 13l4.500-10" fill="none" stroke="#c62020" strokeWidth="2.400" />
          </svg>
        </span>
        <span className="flex w-6 justify-center">
          <svg viewBox="0 0 16 12" className="h-3 w-4" fill="none" stroke="#fff" aria-label="Battery">
            <path d="M6.500 2.500h8v7h-9V8M15.500 5v2M1.500 0v2M3.500 0v2M.5 2.500h4v2h-4zM2.500 5v4.500h3" />
            <path d="M7 4h6v4H7z" fill="#fff" stroke="none" />
          </svg>
        </span>
        <span className="flex w-6 justify-center">
          <svg viewBox="0 0 14 14" className="size-3.5" fill="none" stroke="#fff" aria-label="Wi-Fi">
            <path d="M1 13A12 12 0 0 1 13 1" stroke="#888" />
            <path d="M4 13a9 9 0 0 1 9-9M7 13a6 6 0 0 1 6-6M10 13a3 3 0 0 1 3-3" strokeWidth="1.300" />
          </svg>
        </span>
        <span className="flex w-6 justify-center">
          <svg viewBox="0 0 16 14" className="h-3.5 w-4" fill="none" stroke="#fff" aria-label="Volume">
            <path d="M.5 5v4H3l3.500 3.500v-11L3 5zM9 5c1 1 1 3 0 4M11 3c2 2.500 2 5.500 0 8" />
            <path d="M13 1c3 3.500 3 8.500 0 12" stroke="#888" />
          </svg>
        </span>
        <span className="w-9 text-center text-xs">ENG</span>
        <div className="w-[60px] text-center font-[Roboto,sans-serif] text-xs leading-[18px]">
          <div>12:28</div>
          <div>6/1/2022</div>
        </div>
        <button type="button" aria-label="Notifications" className="relative ml-2 flex h-10 w-8 items-center justify-center">
          <svg viewBox="0 0 16 16" className="-mt-1 size-4" aria-hidden="true">
            <path d="M0 0h16v12H6l-3 3v-3H0z" fill="#fff" />
            <path d="M3 3.500h10M3 6h10M3 8.500h7" stroke="#262b26" />
          </svg>
          <span className="absolute right-0 bottom-1 flex size-4 items-center justify-center rounded-full border border-[#9a9a9a] bg-[#2d312c] text-[10px]">1</span>
        </button>
        <span className="ml-3 h-10 w-[5px] border-l border-[#83867f]" />
      </div>
    </footer>
  );
}

export default function App() {
  return (
    <div className="flex h-screen flex-col overflow-hidden bg-white font-['Open_Sans',sans-serif]">
      <div className="shrink-0">
        <TabStrip />
        <Toolbar />
        <BookmarkBar />
      </div>
      <div className="flex min-h-0 flex-1">
        <Rail />
        <div className="relative flex min-w-0 flex-1 overflow-hidden font-[Roboto,sans-serif] text-sm leading-[22px] font-light">
          <Sider />
          <ProfilePage />
          <EditAvatarModal />
        </div>
      </div>
      <Taskbar />
    </div>
  );
}
